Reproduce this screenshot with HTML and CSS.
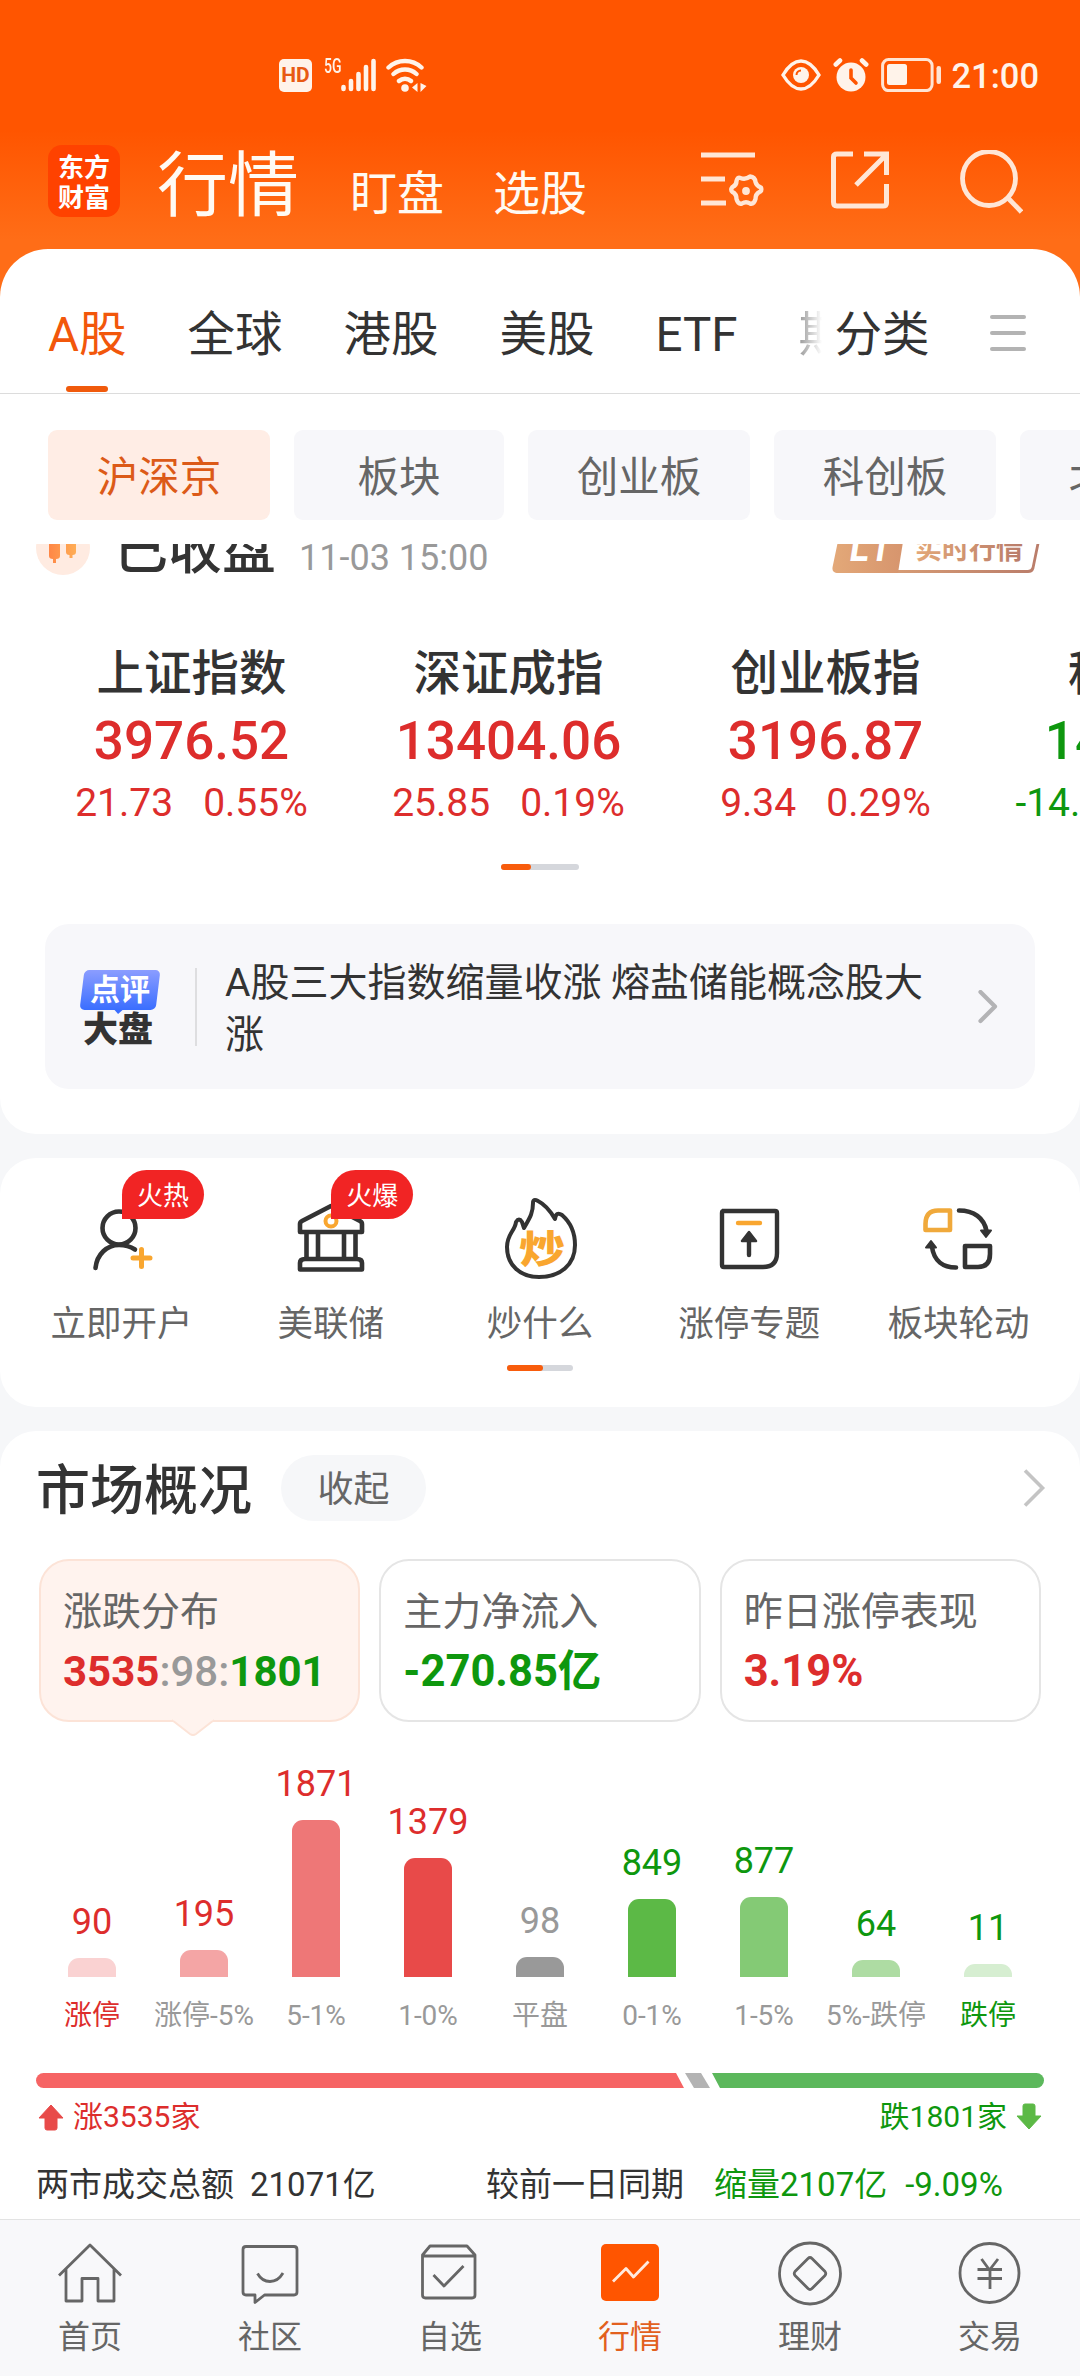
FILE: index.html
```html
<!DOCTYPE html>
<html lang="zh-CN">
<head>
  <meta charset="utf-8">
  <title>行情</title>
  <link rel="stylesheet" href="styles.css">
</head>
<body>
  <div class="top">
    <div class="status">
      <div class="status-left">
        <span class="hd">HD</span>
        <span class="net">5G</span>
        <svg class="signal" width="36" height="34" viewBox="0 0 36 34" stroke="#fff3ea" stroke-width="4.6" stroke-linecap="round">
          <path d="M2.5 29v2M10 23v8M17.500 16v15M25 9v22M32.500 3v28"/>
        </svg>
        <svg width="42" height="34" viewBox="0 0 42 34" fill="none" stroke="#fff3ea" stroke-width="4.400" stroke-linecap="round">
          <path d="M2.500 9.500a24 24 0 0 1 33 0M7.500 16a17 17 0 0 1 23 0M13 23a9 9 0 0 1 12 0"/>
          <circle cx="19" cy="30" r="3.800" fill="#fff3ea" stroke="none"/>
          <path d="M31.500 25v9l-5.500-4.500zM34.500 25v9l6-6z" fill="#fff3ea" stroke="none"/>
        </svg>
      </div>
      <div class="status-right">
        <svg width="40" height="34" viewBox="0 0 40 34" fill="none" stroke="#fff3ea" stroke-width="3.400">
          <path d="M2 17C8 7 14 3 20 3s12 4 18 14C32 27 26 31 20 31S8 27 2 17z"/>
          <circle cx="20" cy="17" r="8" fill="#fff3ea" stroke="none"/>
          <path d="M15.500 17a4.500 4.500 0 0 1 4.500-4.500" stroke="#ff5500" stroke-width="2"/>
        </svg>
        <svg width="36" height="34" viewBox="0 0 36 34" stroke-linecap="round">
          <circle cx="18" cy="19" r="14.500" fill="#fff3ea"/>
          <path d="M2.800 6.500L7 2.500M33.200 6.500L29 2.500" stroke="#fff3ea" stroke-width="4.600"/>
          <path d="M18 12v8l5 5" fill="none" stroke="#ff5500" stroke-width="3.600"/>
        </svg>
        <svg width="60" height="34" viewBox="0 0 60 34">
          <rect x="1.600" y="1.600" width="49.500" height="31" rx="6" fill="none" stroke="#ffe4d3" stroke-width="3"/>
          <rect x="6" y="6" width="20" height="21" rx="2.500" fill="#fff3ea"/>
          <rect x="55.500" y="8" width="4.500" height="18" rx="2.200" fill="#ffe4d3"/>
        </svg>
        <span class="clock">21:00</span>
      </div>
    </div>

    <div class="header">
      <div class="logo">东方<br>财富</div>
      <div class="titles">
        <h1>行情</h1>
        <span>盯盘</span>
        <span>选股</span>
      </div>
      <div class="actions">
        <svg width="64" height="60" viewBox="0 0 64 60" fill="none" stroke="#ffe6d6" stroke-width="5">
          <path d="M0 5h54M0 29h24M0 53h25"/>
          <path d="M39.500 28q5 2 9.500-1.500Q54 27 54.500 32q1 4 5.500 5.500q1 3.500-1.500 4.500q-4 2-4 7q-1.500 5.500-5.500 4.500q-4-2.500-8 0q-4 1-5.500-4.500q0-5-4-7q-2.500-2 0-5q4-1.500 4-6q1-4.500 4-3z" stroke-width="4.400" stroke-linejoin="round"/>
          <circle cx="45" cy="41" r="3.900" fill="#ffe6d6" stroke="none"/>
        </svg>
        <svg width="58" height="60" viewBox="0 0 58 60" fill="none" stroke="#ffe6d6" stroke-width="5">
          <path d="M22 4H6Q2.500 4 2.500 7V52Q2.500 56 6 56H52Q55.500 56 55.500 53V34M33 4H55.500V25M55 5L25 35"/>
        </svg>
        <svg width="64" height="66" viewBox="0 0 64 66" fill="none" stroke="#ffe6d6" stroke-width="4.800">
          <ellipse cx="30" cy="28.500" rx="26.500" ry="27"/>
          <path d="M49 48l13.500 14"/>
        </svg>
      </div>
    </div>

    <div class="tabs">
      <div class="tab active">A股</div>
      <div class="tab">全球</div>
      <div class="tab">港股</div>
      <div class="tab">美股</div>
      <div class="tab">ETF</div>
      <div class="tab fade">期</div>
      <div class="tab sort">分类</div>
      <div class="burger"><i></i><i></i><i></i></div>
    </div>
  </div>

  <div class="chips">
    <div class="chip active">沪深京</div>
    <div class="chip short">板块</div>
    <div class="chip">创业板</div>
    <div class="chip">科创板</div>
    <div class="chip">北交所</div>
  </div>

  <div class="content">
    <div class="panel first">
      <div class="session">
        <svg width="54" height="54" viewBox="0 0 54 54">
          <defs>
            <linearGradient id="candle" x1="0" x2="1"><stop offset="0" stop-color="#ff8746"/><stop offset="1" stop-color="#ffad55"/></linearGradient>
          </defs>
          <circle cx="27" cy="27" r="27" fill="#ffebe1"/>
          <path d="M13 14h11v21q0 3-4 3v4h-3v-4q-4 0-4-3zM30 14h10v17q0 3-3.500 3v3h-3v-3q-3.500 0-3.500-3z" fill="url(#candle)"/>
        </svg>
        <b>已收盘</b>
        <span class="time">11-03 15:00</span>
        <svg class="level" width="212" height="52" viewBox="0 0 212 52">
          <defs>
            <linearGradient id="gold" x1="0" x2="1"><stop offset="0" stop-color="#e3a878"/><stop offset="1" stop-color="#b97c6a"/></linearGradient>
            <linearGradient id="goldFill" x1="0" x2="1"><stop offset="0" stop-color="#e3a878"/><stop offset="1" stop-color="#d6946d"/></linearGradient>
          </defs>
          <path d="M14 2H210L201 46Q200 49.500 196 49.500H6Q1 50 2 45L11 2z" fill="none" stroke="url(#gold)" stroke-width="2.800"/>
          <path d="M12 1H74L66 51H7Q0 51 1.500 44z" fill="url(#goldFill)"/>
          <text x="18" y="39" class="level-mark" textLength="40" lengthAdjust="spacingAndGlyphs">L1</text>
          <text x="83" y="37" class="level-text" fill="url(#gold)">实时行情</text>
        </svg>
      </div>

      <div class="indexes">
        <div class="index up">
          <h3>上证指数</h3>
          <strong>3976.52</strong>
          <p><span>21.73</span><span>0.55%</span></p>
        </div>
        <div class="index up">
          <h3>深证成指</h3>
          <strong>13404.06</strong>
          <p><span>25.85</span><span>0.19%</span></p>
        </div>
        <div class="index up">
          <h3>创业板指</h3>
          <strong>3196.87</strong>
          <p><span>9.34</span><span>0.29%</span></p>
        </div>
        <div class="index down">
          <h3>科创50</h3>
          <strong>1401.31</strong>
          <p><span>-14.61</span><span>-1.03%</span></p>
        </div>
      </div>
      <div class="pager"><i></i></div>

      <div class="comment">
        <div class="comment-logo">
          <div class="bubble"><span>点评</span></div>
          <b>大盘</b>
        </div>
        <div class="comment-text">A股三大指数缩量收涨 熔盐储能概念股大涨</div>
        <svg width="20" height="34" viewBox="0 0 20 34" fill="none" stroke="#b3b3b5" stroke-width="4.200" stroke-linecap="round" stroke-linejoin="round">
          <path d="M2.500 2L17 16.500L2.500 31"/>
        </svg>
      </div>
    </div>

    <div class="panel tools">
      <div class="tool-grid">
        <div class="tool">
          <svg width="84" height="88" viewBox="0 0 84 88" fill="none" stroke="#333" stroke-width="4.600" stroke-linecap="round">
            <circle cx="39" cy="43" r="16.500"/>
            <path d="M15.500 83C17 69 27 60 39 60Q48 60 55 64.500"/>
            <path d="M53 73h17M61.500 64.500v17" stroke="#f9a62f" stroke-width="5"/>
          </svg>
          <span>立即开户</span>
          <em class="badge">火热</em>
        </div>
        <div class="tool">
          <svg width="84" height="88" viewBox="0 0 84 88" fill="none" stroke="#333" stroke-width="4.600" stroke-linejoin="round">
            <path d="M11 47V39Q11 37 13 36L42 21L71 36Q73 37 73 39V47Z"/>
            <path d="M17.500 47V74M29 47V74M55 47V74M66.500 47V74"/>
            <path d="M11 84.500V78Q11 74 16 74H68Q73 74 73 78V84.500Z"/>
            <circle cx="42" cy="36" r="5.500" stroke="#f9a62f" stroke-width="4"/>
          </svg>
          <span>美联储</span>
          <em class="badge">火爆</em>
        </div>
        <div class="tool">
          <svg width="84" height="88" viewBox="0 0 84 88" fill="none" stroke="#333" stroke-width="4" stroke-linejoin="round">
            <path d="M41 92C22 92 9 80 9 62C9 49 17 46 18 37Q21 32 24 37L26 43C31 34 35 29 35 18Q35 13 40 16C48 20 53 27 57 34Q58 26 64 30C72 37 77 48 77 60C77 80 62 92 41 92Z"/>
            <text x="21" y="78" class="fire-text" textLength="46" lengthAdjust="spacingAndGlyphs">炒</text>
          </svg>
          <span>炒什么</span>
        </div>
        <div class="tool">
          <svg width="84" height="88" viewBox="0 0 84 88" fill="none" stroke="#333" stroke-width="4.400" stroke-linejoin="round">
            <path d="M15 26H68Q70 26 70 28V68Q70 82 56 82H17Q15 82 15 80V28Q15 26 17 26"/>
            <path d="M42 50V70" stroke-linecap="round"/>
            <path d="M42 47l7 9H35z" fill="#333" stroke-width="2.500"/>
            <path d="M31 38h22" stroke="#f9a62f" stroke-linecap="round"/>
          </svg>
          <span>涨停专题</span>
        </div>
        <div class="tool">
          <svg width="84" height="88" viewBox="0 0 84 88" fill="none" stroke="#333" stroke-width="4.600" stroke-linejoin="round">
            <path d="M34 45H9.500V39Q9.500 25.500 22 25.500H34Z" stroke="#f0a93b"/>
            <path d="M49 61H74V69Q74 82 62 82H49Z"/>
            <path d="M43 25.500C58 25.500 68 33 70.500 46" stroke-linecap="round"/>
            <path d="M65 45.500h10l-5 6.500zM15 56l-5 6.500h10z" fill="#333" stroke-width="2"/>
            <path d="M16 62C18 76 27 82.500 40 82.500" stroke-linecap="round"/>
          </svg>
          <span>板块轮动</span>
        </div>
      </div>
      <div class="pager small"><i></i></div>
    </div>

    <div class="panel market">
      <div class="market-head">
        <h2>市场概况</h2>
        <span class="fold">收起</span>
        <svg width="24" height="38" viewBox="0 0 24 38" fill="none" stroke="#c4c4c4" stroke-width="3.600">
          <path d="M3 1.500L20.500 19L3 36.500"/>
        </svg>
      </div>

      <div class="boxes">
        <div class="box selected">
          <p>涨跌分布</p>
          <strong><span class="up">3535</span><span class="flat">:98:</span><span class="down">1801</span></strong>
          <svg class="tail" width="42" height="18" viewBox="0 0 42 18"><path d="M0 1L18 15Q21 17 24 15L42 1" fill="#fff3ee" stroke="#fce3d7" stroke-width="2"/><path d="M1 0h40" stroke="#fff3ee" stroke-width="2.500"/></svg>
        </div>
        <div class="box">
          <p>主力净流入</p>
          <strong class="down flow">-270.85亿</strong>
        </div>
        <div class="box">
          <p>昨日涨停表现</p>
          <strong class="up flow">3.19%</strong>
        </div>
      </div>

      <div class="chart">
        <div class="col up"><span>90</span><i class="r1" style="height:19px"></i></div>
        <div class="col up"><span>195</span><i class="r2" style="height:27px"></i></div>
        <div class="col up"><span>1871</span><i class="r3" style="height:157px"></i></div>
        <div class="col up"><span>1379</span><i class="r4" style="height:119px"></i></div>
        <div class="col flat"><span>98</span><i class="g0" style="height:20px"></i></div>
        <div class="col down"><span>849</span><i class="g4" style="height:78px"></i></div>
        <div class="col down"><span>877</span><i class="g3" style="height:80px"></i></div>
        <div class="col down"><span>64</span><i class="g2" style="height:17px"></i></div>
        <div class="col down"><span>11</span><i class="g1" style="height:13px"></i></div>
      </div>
      <div class="labels">
        <span class="up">涨停</span>
        <span>涨停-5%</span>
        <span>5-1%</span>
        <span>1-0%</span>
        <span>平盘</span>
        <span>0-1%</span>
        <span>1-5%</span>
        <span>5%-跌停</span>
        <span class="down">跌停</span>
      </div>

      <div class="ratio">
        <i class="ratio-up"></i><i class="ratio-flat"></i><i class="ratio-down"></i>
      </div>
      <div class="ratio-text">
        <div class="up">
          <svg width="28" height="28" viewBox="0 0 28 28"><path d="M14 2L26 15H20V25Q20 27 18 27H10Q8 27 8 25V15H2Z" fill="#e84a49" stroke="#e84a49" stroke-linejoin="round"/></svg>
          涨3535家
        </div>
        <div class="down">
          跌1801家
          <svg width="28" height="28" viewBox="0 0 28 28"><path d="M14 26L2 13H8V3Q8 1 10 1H18Q20 1 20 3V13H26Z" fill="#5cb946" stroke="#5cb946" stroke-linejoin="round"/></svg>
        </div>
      </div>
      <div class="turnover">
        <span>两市成交总额</span>
        <span class="amount">21071亿</span>
        <span class="compare">较前一日同期</span>
        <span class="shrink down">缩量2107亿</span>
        <span class="rate down">-9.09%</span>
      </div>
    </div>
  </div>

  <div class="nav">
    <div class="nav-item">
      <svg width="68" height="68" viewBox="0 0 68 68">
        <path d="M3 35.500L34 5L65 35.500M10 29V61H26V38.500H42V61H58V29"/>
      </svg>
      <span>首页</span>
    </div>
    <div class="nav-item">
      <svg width="68" height="68" viewBox="0 0 68 68">
        <path d="M10 6.500H58Q61 6.500 61 9.500V52Q61 55 58 55H28.500L19 62.500V55H10Q7 55 7 52V9.500Q7 6.500 10 6.500ZM21.500 33.500Q26 41.500 34 41.500T47 33"/>
      </svg>
      <span>社区</span>
    </div>
    <div class="nav-item">
      <svg width="68" height="68" viewBox="0 0 68 68">
        <path d="M6.500 15L14 6H51L59 15V55Q59 58 56 58H9.500Q6.500 58 6.500 55ZM6.500 16H59M17.500 35L28 46L47.500 26"/>
      </svg>
      <span>自选</span>
    </div>
    <div class="nav-item active">
      <svg width="68" height="68" viewBox="0 0 68 68">
        <rect x="5" y="4" width="58" height="57" rx="5" fill="#ff5500" stroke="none"/>
        <path d="M17 41.500L30 28.500L37.500 37L52.500 21.500" stroke="#ffeadf"/>
      </svg>
      <span>行情</span>
    </div>
    <div class="nav-item">
      <svg width="68" height="68" viewBox="0 0 68 68">
        <circle cx="34" cy="33.500" r="30.500"/>
        <path d="M32 18.500Q34 16.500 36 18.500L49 31.500Q50.500 33.500 49 35.500L36 48.500Q34 50.500 32 48.500L19 35.500Q17.500 33.500 19 31.500Z"/>
      </svg>
      <span>理财</span>
    </div>
    <div class="nav-item">
      <svg width="68" height="68" viewBox="0 0 68 68">
        <circle cx="33.500" cy="33" r="29.500"/>
        <path d="M25.500 19L33.500 30L42 19M21.500 29.500H46M21.500 38.500H46M34 29V49"/>
      </svg>
      <span>交易</span>
    </div>
  </div>
</body>
</html>
```

FILE: styles.css
```css
* {
  box-sizing: border-box;
  margin: 0;
  padding: 0;
}
body {
  width: 1080px;
  height: 2376px;
  overflow: hidden;
  display: flex;
  flex-direction: column;
  font-family: Roboto, "Noto Sans CJK SC", sans-serif;
  background: #f6f7f9;
  color: #333;
}
svg {
  display: block;
  flex-shrink: 0;
}
i, em {
  font-style: normal;
}
.up {
  color: #dd2d2c;
}
.down {
  color: #0e970e;
}
.flat {
  color: #999;
}

/* header */
.top {
  height: 394px;
  flex-shrink: 0;
  background: linear-gradient(#ff5500 130px, #ff6d17 240px);
}
.status {
  height: 92px;
  padding: 58px 41px 0 279px;
  display: flex;
  justify-content: space-between;
}
.status-left, .status-right {
  display: flex;
  height: 34px;
}
.hd {
  width: 33px;
  height: 33px;
  margin: 1px 12px 0 0;
  border-radius: 5px;
  background: #fff3ea;
  color: #e85a14;
  font-size: 21px;
  line-height: 33px;
  font-weight: 700;
  text-align: center;
}
.net {
  width: 17px;
  color: #fff3ea;
  font-size: 20px;
  line-height: 16px;
  font-weight: 500;
  transform: scaleX(0.7);
  transform-origin: left;
}
.signal {
  margin-right: 9px;
}
.status-right svg {
  margin-right: 12px;
}
.status-right svg:nth-child(3) {
  margin-right: 10px;
}
.clock {
  color: #fff3ea;
  font-size: 34.5px;
  line-height: 36px;
  font-weight: 500;
}
.header {
  height: 157px;
  padding: 53px 57px 0 48px;
  display: flex;
}
.logo {
  width: 72px;
  height: 72px;
  padding-top: 6px;
  border-radius: 14px;
  background: #ff4200;
  color: #fff;
  font-family: "Noto Sans CJK SC", sans-serif;
  font-size: 26px;
  line-height: 30px;
  font-weight: 700;
  text-align: center;
}
.titles {
  display: flex;
  align-items: baseline;
  margin-left: 37px;
  color: #fffaf3;
}
.titles h1 {
  font-size: 71px;
  line-height: 82px;
  font-weight: 400;
}
.titles span {
  margin-left: 51px;
  font-size: 47px;
  line-height: 60px;
}
.titles span + span {
  margin-left: 49px;
}
.actions {
  flex: 1;
  display: flex;
  justify-content: flex-end;
  padding-top: 5px;
}
.actions svg:nth-child(2) {
  margin: 0 70px 0 66px;
}
.tabs {
  height: 145px;
  padding: 48px 54px 0 48px;
  display: flex;
  background: #fff;
  border-bottom: 1px solid #dcdcdc;
  border-radius: 48px 48px 0 0;
}
.tab {
  position: relative;
  margin-right: 61px;
  font-size: 47.5px;
  line-height: 76px;
  white-space: nowrap;
}
.tab.active {
  color: #f2570b;
}
.tab.active::after {
  content: "";
  position: absolute;
  left: 18px;
  bottom: 1px;
  width: 42px;
  height: 6px;
  border-radius: 3px;
  background: #f05a0c;
}
.tab.fade {
  width: 23px;
  margin-right: 13px;
  overflow: hidden;
  color: transparent;
  background: linear-gradient(90deg, #999, #fff);
  -webkit-background-clip: text;
  background-clip: text;
}
.burger {
  margin: 18px 0 0 auto;
}
.tab.sort {
  margin-right: 0;
}
.burger i {
  display: block;
  width: 36px;
  height: 4px;
  margin-bottom: 12px;
  border-radius: 2px;
  background: #b3b3b3;
}

/* category chips */
.chips {
  height: 150px;
  flex-shrink: 0;
  padding: 36px 0 0 48px;
  display: flex;
  gap: 24px;
  overflow: hidden;
  background: #fff;
}
.chip {
  width: 222px;
  height: 90px;
  flex-shrink: 0;
  border-radius: 9px;
  background: #f7f7fa;
  color: #666;
  font-size: 41.5px;
  line-height: 95px;
  text-align: center;
}
.chip.short {
  width: 210px;
}
.chip.active {
  background: #ffede5;
  color: #dc5a18;
}

/* scrolling area */
.content {
  height: 1675px;
  overflow: hidden;
}
.panel {
  margin-bottom: 24px;
  border-radius: 36px;
  background: #fff;
}
.panel.first {
  height: 590px;
  border-radius: 0 0 36px 36px;
  overflow: hidden;
}
.session {
  height: 54px;
  margin-top: -23px;
  padding: 0 36px 0 36px;
  display: flex;
  align-items: center;
}
.session b {
  margin: 6px 0 0 24px;
  font-size: 54px;
  font-weight: 500;
  line-height: 60px;
}
.time {
  margin: 19px 0 0 23px;
  color: #999;
  font-size: 36px;
  line-height: 40px;
}
.level {
  margin-left: auto;
}
.level-text {
  font-size: 27px;
  font-weight: 700;
}
.level-mark {
  font-size: 40px;
  font-weight: 700;
  font-style: italic;
  fill: #fff;
}
.indexes {
  display: flex;
  margin: 71px 0 0 33px;
  overflow: hidden;
}
.index {
  width: 317px;
  flex-shrink: 0;
  text-align: center;
}
.index h3 {
  color: #333;
  font-size: 47.5px;
  line-height: 56px;
  font-weight: 500;
}
.index strong {
  display: block;
  margin-top: 9px;
  font-size: 53px;
  line-height: 60px;
  font-weight: 500;
}
.index p {
  display: flex;
  justify-content: center;
  gap: 30px;
  margin-top: 10px;
  font-size: 39px;
  line-height: 44px;
}
.pager {
  width: 78px;
  height: 6px;
  margin: 39px auto 0;
  border-radius: 3px;
  background: #d5d7dc;
}
.pager i {
  display: block;
  width: 30px;
  height: 6px;
  border-radius: 3px;
  background: #f85c0c;
}
.comment {
  height: 165px;
  margin: 54px 45px 0;
  padding: 0 37px 0 35px;
  display: flex;
  align-items: center;
  border-radius: 24px;
  background: #f7f7fa;
}
.comment-logo {
  width: 117px;
  height: 78px;
  padding-top: 2px;
  border-right: 2px solid #dedee0;
}
.bubble {
  position: relative;
  width: 76px;
  height: 40px;
  margin-left: 2px;
  border-radius: 5px;
  background: linear-gradient(#8b9dff, #3a6eff);
  color: #fff;
  font-size: 30px;
  line-height: 40px;
  font-weight: 700;
  text-align: center;
  transform: skewX(-7deg);
}
.bubble span {
  display: block;
  transform: skewX(7deg);
}
.bubble::after {
  content: "";
  position: absolute;
  left: 34px;
  top: 39px;
  border: 5px solid transparent;
  border-top-color: #3a6eff;
  border-bottom: 0;
}
.comment-logo b {
  display: block;
  margin-left: 3px;
  font-family: "Noto Sans CJK SC", sans-serif;
  font-size: 35px;
  line-height: 34px;
  font-weight: 900;
}
.comment-text {
  width: 710px;
  margin: 5px 0 0 28px;
  font-size: 39px;
  line-height: 52px;
}
.comment > svg {
  margin-left: auto;
}

.tools {
  height: 249px;
}
.tool-grid {
  display: flex;
  padding: 0 17px 0 17px;
}
.tool {
  position: relative;
  flex: 1;
  display: flex;
  flex-direction: column;
  align-items: center;
  padding-top: 27px;
  color: #666;
  font-size: 35.5px;
  line-height: 44px;
}
.tool svg {
  margin-bottom: 29px;
  overflow: visible;
}
.fire-text {
  font-size: 39px;
  font-weight: 900;
  fill: #f9a62f;
  stroke: none;
}
.badge {
  position: absolute;
  left: 105px;
  top: 12px;
  width: 82px;
  height: 49px;
  border-radius: 25px 25px 25px 0;
  background: #f12424;
  color: #fff;
  font-size: 26px;
  line-height: 52px;
  text-align: center;
}
.pager.small {
  width: 66px;
  margin-top: 19px;
}
.small i {
  width: 36px;
}

.market {
  margin-bottom: 0;
  height: 820px;
}
.market-head {
  display: flex;
  align-items: center;
  height: 114px;
  padding: 0 34px 12px 36px;
}
.market-head h2 {
  margin-top: 20px;
  font-size: 54px;
  line-height: 60px;
  font-weight: 500;
}
.fold {
  width: 145px;
  height: 66px;
  margin: 12px 0 0 29px;
  border-radius: 33px;
  background: #f6f7f9;
  color: #666;
  font-size: 36px;
  line-height: 71px;
  text-align: center;
}
.market-head svg {
  margin: 12px 0 0 auto;
}
.boxes {
  display: flex;
  gap: 19px;
  padding: 14px 39px 0;
}
.box {
  position: relative;
  flex: 1;
  height: 163px;
  padding: 24px 0 0 22px;
  border: 2px solid #e5e5e5;
  border-radius: 30px;
  white-space: nowrap;
}
.box.selected {
  background: #fff3ee;
  border-color: #fce3d7;
}
.box p {
  color: #666;
  font-size: 39px;
  line-height: 54px;
}
.box strong {
  display: block;
  margin-top: 6px;
  font-size: 42px;
  line-height: 54px;
  font-weight: 700;
}
.box .flow {
  font-size: 43.5px;
}
.box .flat {
  font-weight: 500;
}
.tail {
  position: absolute;
  left: 131px;
  top: 158px;
}
.chart {
  display: flex;
  height: 255px;
  padding: 0 36px;
  align-items: flex-end;
}
.col {
  flex: 1;
  display: flex;
  flex-direction: column;
  align-items: center;
  font-size: 36px;
  line-height: 40px;
}
.col span {
  margin-bottom: 16px;
}
.col i {
  width: 48px;
  border-radius: 11px 11px 0 0;
}
.r1 { background: #fad2d2; }
.r2 { background: #f4a5a5; }
.r3 { background: #ee7777; }
.r4 { background: #e84a49; }
.g0 { background: #999; }
.g4 { background: #5cb946; }
.g3 { background: #84ca75; }
.g2 { background: #aedca3; }
.g1 { background: #d6eed1; }
.labels {
  display: flex;
  justify-content: space-between;
  padding: 19px 36px 0;
  color: #999;
  font-size: 28px;
  line-height: 40px;
}
.labels span {
  width: 112px;
  display: flex;
  justify-content: center;
  white-space: nowrap;
}
.labels .up {
  color: #dd2d2c;
}
.labels .down {
  color: #0e970e;
}
.ratio {
  display: flex;
  height: 15px;
  margin: 37px 36px 0;
}
.ratio-up {
  width: 648px;
  border-radius: 8px 0 0 8px;
  background: #f66464;
  clip-path: polygon(0 0, 640px 0, 100% 100%, 0 100%);
}
.ratio-flat {
  width: 25px;
  margin: 0 2px 0 1px;
  background: #b3b3b3;
  clip-path: polygon(0 0, 16px 0, 100% 100%, 9px 100%);
}
.ratio-down {
  flex: 1;
  border-radius: 0 8px 8px 0;
  background: #5cb85c;
  clip-path: polygon(0 0, 100% 0, 100% 100%, 8px 100%);
}
.ratio-text {
  display: flex;
  justify-content: space-between;
  padding: 8px 37px 0;
  font-size: 30px;
  line-height: 42px;
}
.ratio-text div {
  display: flex;
  align-items: center;
  gap: 8px;
}
.turnover {
  display: flex;
  padding: 21px 0 0 36px;
  font-size: 33px;
  line-height: 51px;
  white-space: nowrap;
}
.amount {
  width: 236px;
  margin-left: 16px;
}
.shrink {
  margin-left: 30px;
}
.rate {
  margin-left: 18px;
}

/* bottom navigation */
.nav {
  height: 157px;
  display: flex;
  padding-top: 19px;
  border-top: 1px solid #e3e3e3;
  background: #f8f8fa;
}
.nav-item {
  flex: 1;
  display: flex;
  flex-direction: column;
  align-items: center;
  color: #666;
  font-size: 32px;
  line-height: 40px;
}
.nav-item svg {
  margin: 1px 0 9px;
  fill: none;
  stroke: #666;
  stroke-width: 2.8;
  stroke-linejoin: round;
}
.nav-item.active {
  color: #e2601e;
}
```
